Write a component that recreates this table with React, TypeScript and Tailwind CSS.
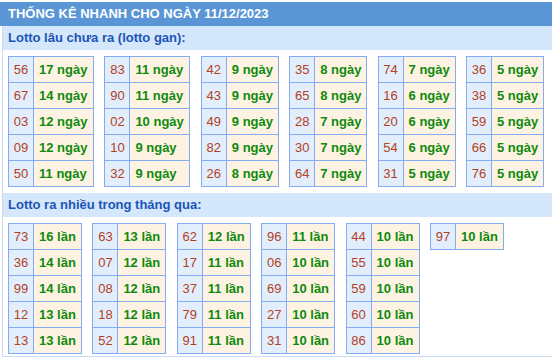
const gan: [string, number][][] = [
  [["56", 17], ["67", 14], ["03", 12], ["09", 12], ["50", 11]],
  [["83", 11], ["90", 11], ["02", 10], ["10", 9], ["32", 9]],
  [["42", 9], ["43", 9], ["49", 9], ["82", 9], ["26", 8]],
  [["35", 8], ["65", 8], ["28", 7], ["30", 7], ["64", 7]],
  [["74", 7], ["16", 6], ["20", 6], ["54", 6], ["31", 5]],
  [["36", 5], ["38", 5], ["59", 5], ["66", 5], ["76", 5]],
];

const nhieu: [string, number][][] = [
  [["73", 16], ["36", 14], ["99", 14], ["12", 13], ["13", 13]],
  [["63", 13], ["07", 12], ["08", 12], ["18", 12], ["52", 12]],
  [["62", 12], ["17", 11], ["37", 11], ["79", 11], ["91", 11]],
  [["96", 11], ["06", 10], ["69", 10], ["27", 10], ["31", 10]],
  [["44", 10], ["55", 10], ["59", 10], ["60", 10], ["86", 10]],
  [["97", 10]],
];

function LottoTable({ rows, unit }: { rows: [string, number][]; unit: string }) {
  // widest count decides the column width, like an auto table
  const wide = rows.some((r) => r[1] >= 10);
  const dayW = unit === "lần" ? "w-[48px]" : wide ? "w-[60px]" : "w-[52px]";
  return (
    <div className="border-l border-t border-[#84acf3] self-start">
      {rows.map(([num, count]) => (
        <div key={num} className="flex h-[26px]">
          <div className="w-[25px] border-r border-b border-[#84acf3] bg-[#e2eefc] text-[13px] leading-[25px] text-center text-[#b3401e]">
            {num}
          </div>
          <div
            className={`${dayW} border-r border-b border-[#84acf3] bg-[#fef3e2] pl-[5px] text-[13px] leading-[25px] font-bold text-[#0e8a0e] whitespace-nowrap`}
          >
            {count} {unit}
          </div>
        </div>
      ))}
    </div>
  );
}

export default function App() {
  return (
    <div className="w-[552px] h-[360px] bg-white overflow-hidden font-['Liberation_Sans',Arial,sans-serif]">
      <div className="pt-[2px]">
        <div className="h-[24px] bg-[#5a96d6] pl-[8px] text-[13px] leading-[23px] font-bold text-white whitespace-nowrap">
          THỐNG KÊ NHANH CHO NGÀY 11/12/2023
        </div>
        <div className="ml-[2px] border-l border-b border-[#c9dcf3] h-[331px]">
          <div className="h-[24px] bg-[#d4e7fb] pl-[5px] text-[13px] leading-[24px] font-bold text-[#1c55b7]">
            Lotto lâu chưa ra (lotto gan):
          </div>
          <div className="flex gap-[10.4px] pl-[5px] pt-[6px] pb-[6px]">
            {gan.map((t, i) => (
              <LottoTable key={i} rows={t} unit="ngày" />
            ))}
          </div>
          <div className="h-[24px] bg-[#d4e7fb] pl-[5px] text-[13px] leading-[24px] font-bold text-[#1c55b7]">
            Lotto ra nhiều trong tháng qua:
          </div>
          <div className="flex gap-[10.4px] pl-[5px] pt-[6px]">
            {nhieu.map((t, i) => (
              <LottoTable key={i} rows={t} unit="lần" />
            ))}
          </div>
        </div>
      </div>
    </div>
  );
}
